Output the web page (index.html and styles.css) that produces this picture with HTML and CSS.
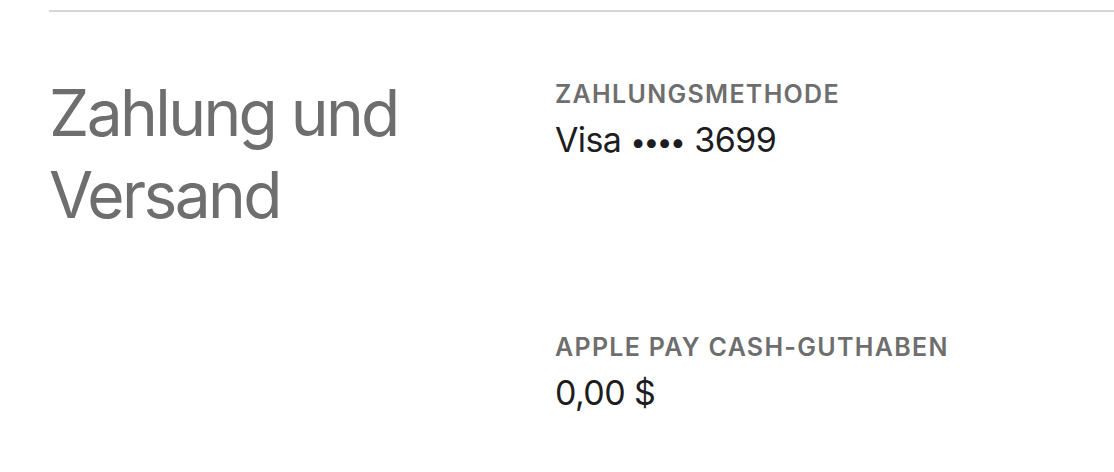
FILE: index.html
```html
<!DOCTYPE html>
<html lang="de">
  <head>
    <meta charset="UTF-8" />
    <meta name="viewport" content="width=device-width, initial-scale=1.0" />
    <title>Zahlung und Versand</title>
    <link rel="stylesheet" href="styles.css">
  </head>
  <body>
    <section class="section">
      <h2 class="section-title">Zahlung und Versand</h2>

      <div class="details">
        <div class="detail">
          <div class="detail-label">Zahlungsmethode</div>
          <div class="detail-value">Visa <span class="dots">••••</span> 3699</div>
        </div>

        <div class="detail">
          <div class="detail-label">Apple Pay Cash-Guthaben</div>
          <div class="detail-value">0,00 $</div>
        </div>
      </div>
    </section>
  </body>
</html>
```

FILE: styles.css
```css
/* Page */
body {
  margin: 0;
  background: #fff;
  font-family: Inter, "Liberation Sans", sans-serif;
  color: #1d1d1f;
}

/* Section with divider on top */
.section {
  margin: 10px 0 0 49px;
  border-top: 2px solid #d6d6d6;
  display: grid;
  grid-template-columns: 506px 1fr;
}

.section-title {
  margin: 60px 0 0 0;
  font-size: 64px;
  font-weight: 400;
  line-height: 82px;
  letter-spacing: -2.6px;
  color: #6e6e6e;
  width: 380px;
}

/* Right column */
.details {
  padding-top: 66px;
}

.detail + .detail {
  margin-top: 167px;
}

.detail-label {
  font-size: 25px;
  font-weight: 600;
  letter-spacing: 1.3px;
  text-transform: uppercase;
  color: #6e6e6e;
  line-height: 32px;
}

.detail-value {
  font-size: 34px;
  line-height: 44px;
  letter-spacing: -0.6px;
  margin-top: 8px;
}

.dots {
  font-size: 28px;
  letter-spacing: -2.5px;
  margin-right: 2px;
}
```
